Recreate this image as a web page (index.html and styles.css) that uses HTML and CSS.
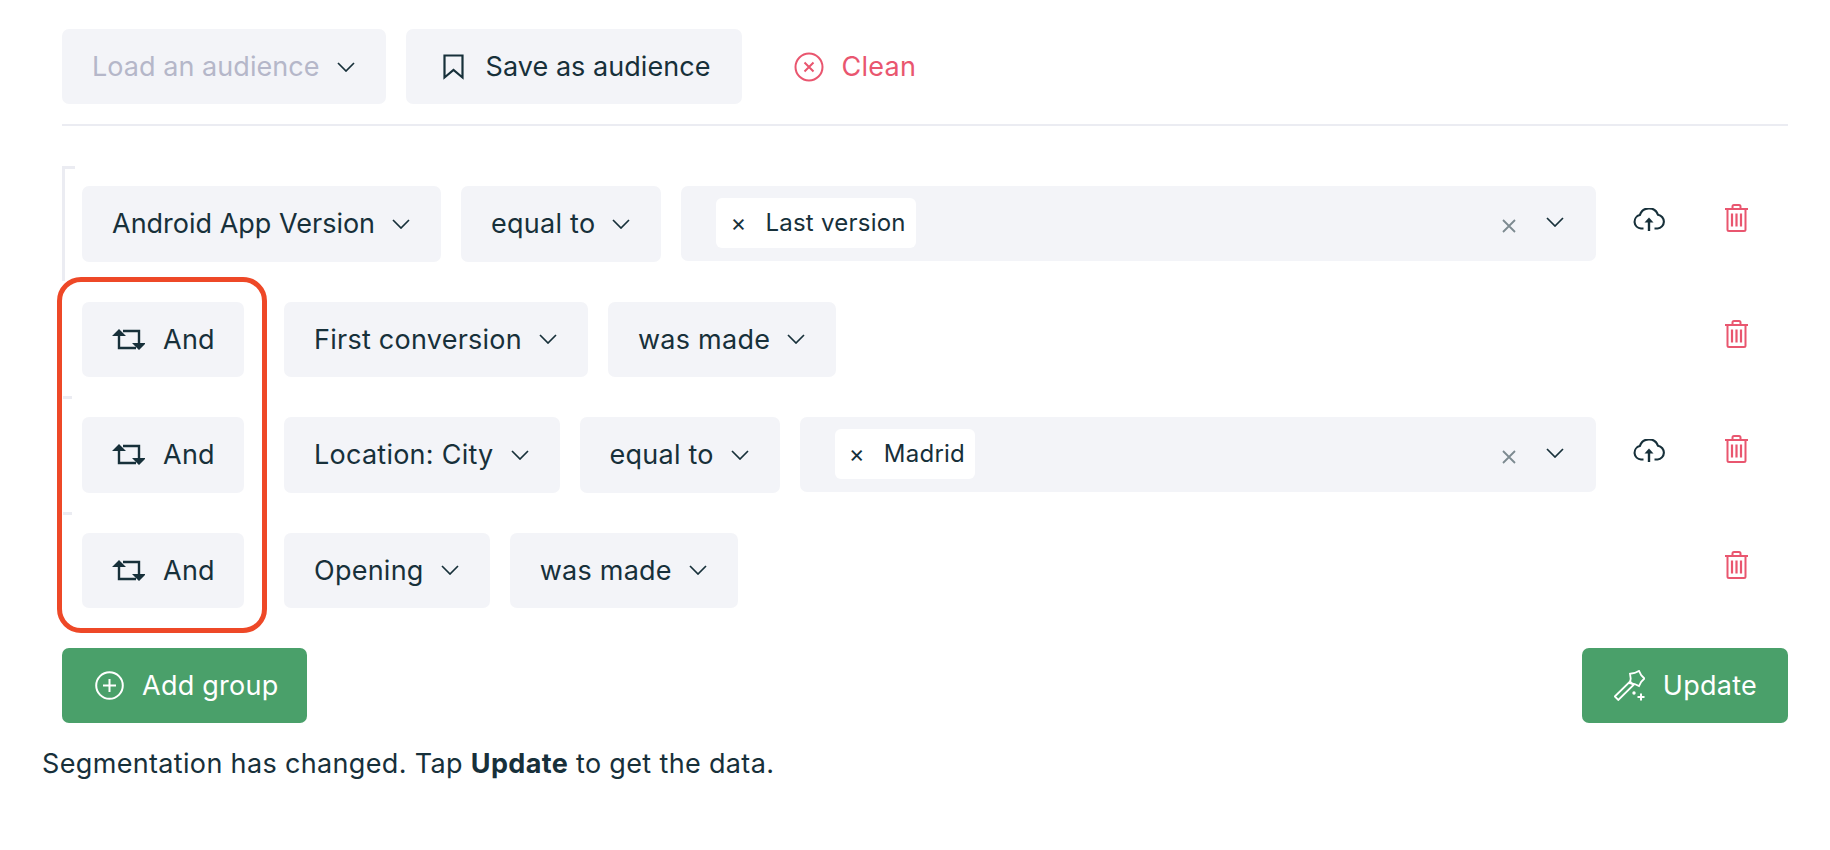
FILE: index.html
```html
<!DOCTYPE html>
<html lang="en">
<head>
  <meta charset="UTF-8" />
  <meta name="viewport" content="width=device-width, initial-scale=1.0" />
  <title>Segmentation</title>
  <link rel="stylesheet" href="styles.css">
</head>
<body>
  <svg class="sprite" xmlns="http://www.w3.org/2000/svg">
    <symbol id="i-chevron" viewBox="0 0 18 10"><path d="M1 1l8 8 8-8" fill="none" stroke="currentColor" stroke-width="1.7"/></symbol>
    <symbol id="i-switch" viewBox="0 0 33 21">
      <path d="M7 6v13h17M11 2h16v14" fill="none" stroke="currentColor" stroke-width="2.4"/>
      <path d="M0 7l7-7 7 7zM20 14h14l-7 7z" fill="currentColor"/>
    </symbol>
    <symbol id="i-cloud" viewBox="0 0 32 23">
      <path d="M10.500 20.500H8a6.800 6.800 0 0 1-1.200-13.400A9.600 9.600 0 0 1 25 6.800a6.900 6.900 0 0 1-.5 13.700h-3" fill="none" stroke="currentColor" stroke-width="2.100"/>
      <path d="M16 23V12" fill="none" stroke="currentColor" stroke-width="2.400"/>
      <path d="M11.500 14.500L16 9.500l4.500 5z" fill="currentColor"/>
    </symbol>
    <symbol id="i-trash" viewBox="0 0 23 28">
      <path d="M0 5h23M7.500 5V2.500q0-1.500 1.500-1.500h5q1.500 0 1.500 1.500V5M2.500 5v20.500q0 1.500 1.500 1.500h15q1.500 0 1.500-1.500V5" fill="none" stroke="currentColor" stroke-width="2"/>
      <path d="M7 9.500v13M11.500 9.500v13M16 9.500v13" fill="none" stroke="currentColor" stroke-width="2.200"/>
    </symbol>
  </svg>

  <div class="page">
    <div class="toolbar">
      <button class="select is-empty">
        Load an audience
        <svg class="chevron"><use href="#i-chevron"/></svg>
      </button>
      <button class="select save-btn">
        <svg class="bookmark" viewBox="0 0 21 26"><path d="M1.500 1.500h18v22l-9-7.500-9 7.500z" fill="none" stroke="currentColor" stroke-width="2.200"/></svg>
        Save as audience
      </button>
      <button class="clean-btn">
        <svg class="clean-icon" viewBox="0 0 30 30"><circle cx="15" cy="15" r="13.500" fill="none" stroke="currentColor" stroke-width="2"/><path d="M10.500 10.500l9 9M19.500 10.500l-9 9" fill="none" stroke="currentColor" stroke-width="2"/></svg>
        Clean
      </button>
    </div>

    <div class="group">
      <div class="row">
        <button class="select tight">Android App Version <svg class="chevron"><use href="#i-chevron"/></svg></button>
        <button class="select">equal to <svg class="chevron"><use href="#i-chevron"/></svg></button>
        <div class="value">
          <span class="tag"><span class="tag-x">×</span>Last version</span>
          <svg class="clear" viewBox="0 0 14 14"><path d="M1 1l12 12M13 1L1 13" fill="none" stroke="currentColor" stroke-width="1.800"/></svg>
          <svg class="chevron"><use href="#i-chevron"/></svg>
        </div>
        <div class="actions">
          <svg class="cloud"><use href="#i-cloud"/></svg>
          <svg class="trash"><use href="#i-trash"/></svg>
        </div>
      </div>

      <div class="row has-tick">
        <button class="select and-btn"><svg class="switch"><use href="#i-switch"/></svg>And</button>
        <button class="select">First conversion <svg class="chevron"><use href="#i-chevron"/></svg></button>
        <button class="select">was made <svg class="chevron"><use href="#i-chevron"/></svg></button>
        <div class="actions">
          <svg class="trash"><use href="#i-trash"/></svg>
        </div>
      </div>

      <div class="row has-tick">
        <button class="select and-btn"><svg class="switch"><use href="#i-switch"/></svg>And</button>
        <button class="select">Location: City <svg class="chevron"><use href="#i-chevron"/></svg></button>
        <button class="select">equal to <svg class="chevron"><use href="#i-chevron"/></svg></button>
        <div class="value">
          <span class="tag"><span class="tag-x">×</span>Madrid</span>
          <svg class="clear" viewBox="0 0 14 14"><path d="M1 1l12 12M13 1L1 13" fill="none" stroke="currentColor" stroke-width="1.800"/></svg>
          <svg class="chevron"><use href="#i-chevron"/></svg>
        </div>
        <div class="actions">
          <svg class="cloud"><use href="#i-cloud"/></svg>
          <svg class="trash"><use href="#i-trash"/></svg>
        </div>
      </div>

      <div class="row">
        <button class="select and-btn"><svg class="switch"><use href="#i-switch"/></svg>And</button>
        <button class="select">Opening <svg class="chevron"><use href="#i-chevron"/></svg></button>
        <button class="select">was made <svg class="chevron"><use href="#i-chevron"/></svg></button>
        <div class="actions">
          <svg class="trash"><use href="#i-trash"/></svg>
        </div>
      </div>

      <div class="marker"></div>
    </div>

    <div class="footer">
      <button class="green-btn add-btn">
        <svg class="add-icon" viewBox="0 0 29 29"><circle cx="14.500" cy="14.500" r="13.300" fill="none" stroke="currentColor" stroke-width="2"/><path d="M14.500 8v13M8 14.500h13" fill="none" stroke="currentColor" stroke-width="2"/></svg>
        Add group
      </button>
      <button class="green-btn update-btn">
        <svg class="wand" viewBox="0 0 31 31">
          <path d="M.8 26.500L16 11.500l3.500 3.500L4.300 30z" fill="none" stroke="currentColor" stroke-width="1.800"/>
          <path d="M30.500 8.500l-3.300 3.400L25 16.100 20.700 14 16 13.200l.7-4.700L16 3.800 20.700 3 25 .9l2.200 4.200z" fill="none" stroke="currentColor" stroke-width="1.800"/>
          <circle cx="20" cy="23" r="1.700" fill="currentColor"/>
          <path d="M27 23.500v7M23.500 27h7" fill="none" stroke="currentColor" stroke-width="2"/>
        </svg>
        Update
      </button>
    </div>
  </div>

  <p class="status">Segmentation has changed. Tap <b>Update</b> to get the data.</p>
</body>
</html>
```

FILE: styles.css
```css
* {
  box-sizing: border-box;
}
body {
  margin: 0;
  background: #fff;
  color: #17303a;
  font-family: 'Inter', 'Liberation Sans', sans-serif;
  font-size: 27px;
  letter-spacing: 0.25px;
}
button {
  font: inherit;
  letter-spacing: inherit;
  color: inherit;
  border: 0;
  cursor: pointer;
}
.sprite {
  display: none;
}
.page {
  padding: 29px 42px 0 62px;
}

.toolbar {
  display: flex;
  gap: 20px;
  padding-bottom: 20px;
  border-bottom: 2px solid #ebecf2;
}
.toolbar .select {
  height: 75px;
  letter-spacing: 0.05px;
}
.select {
  display: flex;
  align-items: center;
  flex: none;
  height: 75.5px;
  padding: 0 31px 0 30px;
  gap: 17px;
  background: #f3f4f8;
  border-radius: 7px;
  white-space: nowrap;
}
.tight {
  letter-spacing: 0;
}
.is-empty {
  color: #b5b7c9;
}
.is-empty .chevron {
  color: #17303a;
}
.chevron {
  width: 18px;
  height: 10px;
  flex: none;
}
.toolbar .save-btn {
  padding-left: 37px;
  gap: 22px;
}
.bookmark {
  width: 21px;
  height: 26px;
}
.clean-btn {
  display: flex;
  align-items: center;
  gap: 18px;
  padding: 0 0 0 32px;
  background: none;
  color: #e9566f;
}
.clean-icon {
  width: 30px;
  height: 30px;
}

.group {
  position: relative;
  margin-top: 40px;
  padding: 20px 0 0 20px;
}
.group::before {
  content: "";
  position: absolute;
  left: 0;
  top: 0;
  width: 10px;
  height: 112px;
  border-left: 3px solid #ebecf2;
  border-top: 3px solid #ebecf2;
}
.row {
  position: relative;
  display: flex;
  align-items: flex-start;
  gap: 20px;
  margin-bottom: 40px;
}
.has-tick::after {
  content: "";
  position: absolute;
  left: -19px;
  bottom: -22px;
  width: 9px;
  height: 3px;
  background: #ebecf2;
}
.and-btn {
  gap: 18px;
  width: 162px;
  margin-right: 20px;
}
.switch {
  width: 33px;
  height: 21px;
  flex: none;
}
.value {
  flex: 1;
  display: flex;
  align-items: center;
  height: 74.5px;
  padding: 0 32px 0 35px;
  background: #f3f4f8;
  border-radius: 7px;
}
.tag {
  display: flex;
  align-items: center;
  height: 50px;
  padding: 0 10px 0 14px;
  margin-top: -1px;
  background: #fff;
  border-radius: 6px;
  font-size: 24px;
}
.tag-x {
  width: 35px;
}
.clear {
  width: 14px;
  height: 14px;
  margin: 5px 0 0 auto;
  color: #7c8a90;
}
.value .chevron {
  margin-left: 30px;
  margin-top: -2px;
}
.actions {
  display: flex;
  align-items: flex-start;
  gap: 60px;
  margin-left: auto;
  padding: 18px 40px 0 0;
}
.value + .actions {
  margin-left: 0;
  width: 172px;
  justify-content: flex-end;
}
.cloud {
  width: 32px;
  height: 23px;
  margin-top: 4px;
  color: #17303a;
}
.trash {
  width: 23px;
  height: 28px;
  color: #e9566f;
}

.marker {
  position: absolute;
  left: -5px;
  top: 111px;
  width: 210px;
  height: 356px;
  border: 5px solid #ee4827;
  border-radius: 24px;
  pointer-events: none;
}

.footer {
  display: flex;
  justify-content: space-between;
}
.green-btn {
  display: flex;
  align-items: center;
  height: 75px;
  gap: 18px;
  background: #4aa06a;
  color: #fff;
  border-radius: 7px;
}
.add-btn {
  padding: 0 28px 0 33px;
}
.add-icon {
  width: 29px;
  height: 29px;
}
.update-btn {
  padding: 0 31px 0 32px;
}
.wand {
  width: 31px;
  height: 31px;
}

.status {
  margin: 23px 0 0 42px;
  line-height: 36px;
  letter-spacing: 0.34px;
}
.status b {
  font-weight: 700;
}
```
